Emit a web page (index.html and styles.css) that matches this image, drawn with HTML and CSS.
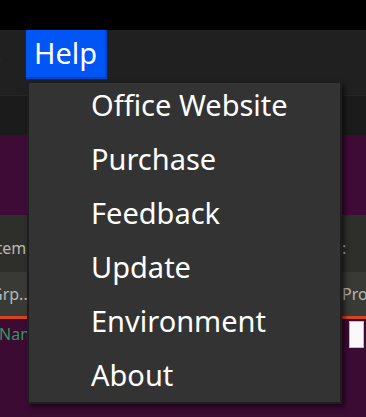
FILE: index.html
```html
<!DOCTYPE html>
<html lang="en">
<head>
    <meta charset="UTF-8">
    <meta name="viewport" content="width=device-width, initial-scale=1.0">
    <title>Help menu</title>
    <link rel="stylesheet" href="styles.css">
</head>
<body>
    <div class="app">
        <div class="topbar"></div>
        <div class="menubar">
            <span class="menu-tail">s</span>
            <div class="menu-help">Help</div>
        </div>
        <div class="toolbar"></div>
        <div class="band"></div>
        <div class="table-head">
            <span class="cell-left">Item</span>
            <span class="cell-right">:</span>
        </div>
        <div class="table-row">
            <span class="cell-left">Grp...</span>
            <span class="cell-right">Pro</span>
        </div>
        <div class="row-line"></div>
        <div class="lower">
            <span class="name">Name</span>
            <span class="check"></span>
        </div>

        <ul class="dropdown">
            <li>Office Website</li>
            <li>Purchase</li>
            <li>Feedback</li>
            <li>Update</li>
            <li>Environment</li>
            <li>About</li>
        </ul>
    </div>
</body>
</html>
```

FILE: styles.css
```css
body{
    margin: 0;
    background-color: #3c0b34;
    font-family: "Noto Sans", "Open Sans", sans-serif;
}
.app{
    position: relative;
    width: 366px;
    height: 417px;
    overflow: hidden;
    display: flex;
    flex-direction: column;
}
.topbar{
    height: 30px;
    background-color: #000;
}
.menubar{
    height: 65px;
    background-color: #202020;
    display: flex;
    align-items: flex-start;
}
.menu-tail{
    width: 39px;
    margin-left: -13px;
    color: #e08a3a;
    font-size: 29px;
    line-height: 45px;
}
.menu-help{
    width: 79px;
    height: 47px;
    background-color: #0055f5;
    border-right: 2px solid #0046cf;
    border-bottom: 2px solid #0046cf;
    color: #fff;
    font-size: 29px;
    line-height: 45px;
    text-indent: 8px;
}
.toolbar{
    height: 39px;
    background-color: #1b1b1b;
    border-top: 1px solid #262626;
}
.band{
    height: 80px;
    background-color: #3e0b36;
}
.table-head,.table-row{
    display: flex;
    justify-content: space-between;
    align-items: center;
    font-size: 16px;
    color: #b8b8b4;
}
.table-head{
    height: 57px;
    background-color: #2e2f2b;
    padding-top: 8px;
    box-sizing: border-box;
}
.table-row{
    height: 44px;
    background-color: #393a36;
}
.cell-left{
    margin-left: -9px;
}
.cell-right{
    width: 24px;
}
.row-line{
    height: 3px;
    background-color: #d8441e;
}
.lower{
    flex: 1;
    display: flex;
    justify-content: space-between;
    align-items: flex-start;
    background-color: #3c0b34;
}
.name{
    color: #2a9a55;
    font-size: 16px;
    margin-top: 4px;
    margin-left: -1px;
}
.check{
    width: 13px;
    height: 25px;
    margin-top: 2px;
    margin-right: 2px;
    background-color: #fbf8fb;
    border: 1px solid #c9b8c6;
}
.dropdown{
    position: absolute;
    top: 81px;
    left: 27px;
    width: 311px;
    height: 315px;
    margin: 0;
    padding: 4px 0 0 0;
    box-sizing: content-box;
    list-style: none;
    background-color: #333;
    border: 2px solid #1e1e1e;
    box-shadow: 3px 3px 5px rgba(0,0,0,0.55);
    display: flex;
    flex-direction: column;
    gap: 18px;
}
.dropdown li{
    height: 36px;
    line-height: 36px;
    padding-left: 62px;
    color: #fff;
    font-size: 29px;
    white-space: nowrap;
}
```
